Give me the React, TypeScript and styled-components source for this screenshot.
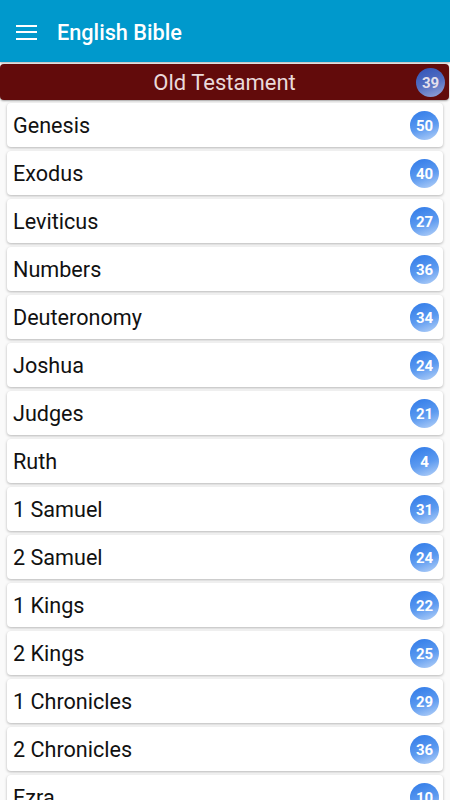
import React from "react";
import styled, { createGlobalStyle } from "styled-components";

const Global = createGlobalStyle`
  html, body { margin: 0; padding: 0; background: #fafafa; }
  body { font-family: Roboto, "Noto Sans", sans-serif; overflow: hidden; }
  * { box-sizing: border-box; }
`;

const Page = styled.div`
  width: 450px;
  height: 800px;
  overflow: hidden;
  background: #fafafa;
  display: flex;
  flex-direction: column;
`;

const AppBar = styled.header`
  height: 62px;
  flex: none;
  background: #0099cc;
  display: flex;
  align-items: center;
  padding: 2px 0 0 16px;
  gap: 20px;
  box-shadow: 0 1px 2px rgba(0, 0, 0, 0.3);
  position: relative;
  z-index: 2;
`;

const MenuIcon = styled.div`
  width: 21px;
  display: flex;
  flex-direction: column;
  gap: 4.5px;
  span {
    display: block;
    height: 2px;
    background: #fff;
  }
`;

const Title = styled.h1`
  margin: 0;
  font-size: 21.7px;
  font-weight: 500;
  color: #fff;
`;

const Content = styled.div`
  padding-top: 2px;
  display: flex;
  flex-direction: column;
`;

const SectionBar = styled.div`
  height: 36px;
  margin: 0 1px 3px 0;
  background: #620b0b;
  border-radius: 4px;
  display: flex;
  align-items: center;
  justify-content: center;
  position: relative;
  box-shadow: 0 1px 2px rgba(0, 0, 0, 0.35);
`;

const SectionTitle = styled.span`
  font-size: 22px;
  color: #eadada;
`;

const Badge = styled.span<{ $dim?: boolean }>`
  width: 29px;
  height: 29px;
  border-radius: 50%;
  display: flex;
  align-items: center;
  justify-content: center;
  color: #fff;
  font-size: 15px;
  font-weight: 700;
  background: ${(p) =>
    p.$dim
      ? "linear-gradient(160deg, #2f53b8 0%, #5670c2 55%, #9aa8d8 100%)"
      : "linear-gradient(160deg, #2f7ae8 0%, #5c9af0 55%, #b8d3f8 100%)"};
  ${(p) => (p.$dim ? "color: #e4e0ec;" : "")}
`;

const SectionBadge = styled(Badge)`
  position: absolute;
  right: 4px;
  top: 4px;
`;

const List = styled.div`
  display: flex;
  flex-direction: column;
  gap: 4px;
  padding: 0 7px;
`;

const Card = styled.div`
  height: 44px;
  background: #fff;
  border-radius: 4px;
  box-shadow: 0 1px 3px rgba(0, 0, 0, 0.28);
  display: flex;
  align-items: center;
  justify-content: space-between;
  padding: 1px 4px 0 6px;
`;

const BookName = styled.span`
  font-size: 21.6px;
  color: #111;
`;

const books: [string, number][] = [
  ["Genesis", 50],
  ["Exodus", 40],
  ["Leviticus", 27],
  ["Numbers", 36],
  ["Deuteronomy", 34],
  ["Joshua", 24],
  ["Judges", 21],
  ["Ruth", 4],
  ["1 Samuel", 31],
  ["2 Samuel", 24],
  ["1 Kings", 22],
  ["2 Kings", 25],
  ["1 Chronicles", 29],
  ["2 Chronicles", 36],
  ["Ezra", 10],
];

export default function App() {
  return (
    <Page>
      <Global />
      <AppBar>
        <MenuIcon>
          <span />
          <span />
          <span />
        </MenuIcon>
        <Title>English Bible</Title>
      </AppBar>
      <Content>
        <SectionBar>
          <SectionTitle>Old Testament</SectionTitle>
          <SectionBadge $dim>39</SectionBadge>
        </SectionBar>
        <List>
          {books.map(([name, n]) => (
            <Card key={name}>
              <BookName>{name}</BookName>
              <Badge>{n}</Badge>
            </Card>
          ))}
        </List>
      </Content>
    </Page>
  );
}
